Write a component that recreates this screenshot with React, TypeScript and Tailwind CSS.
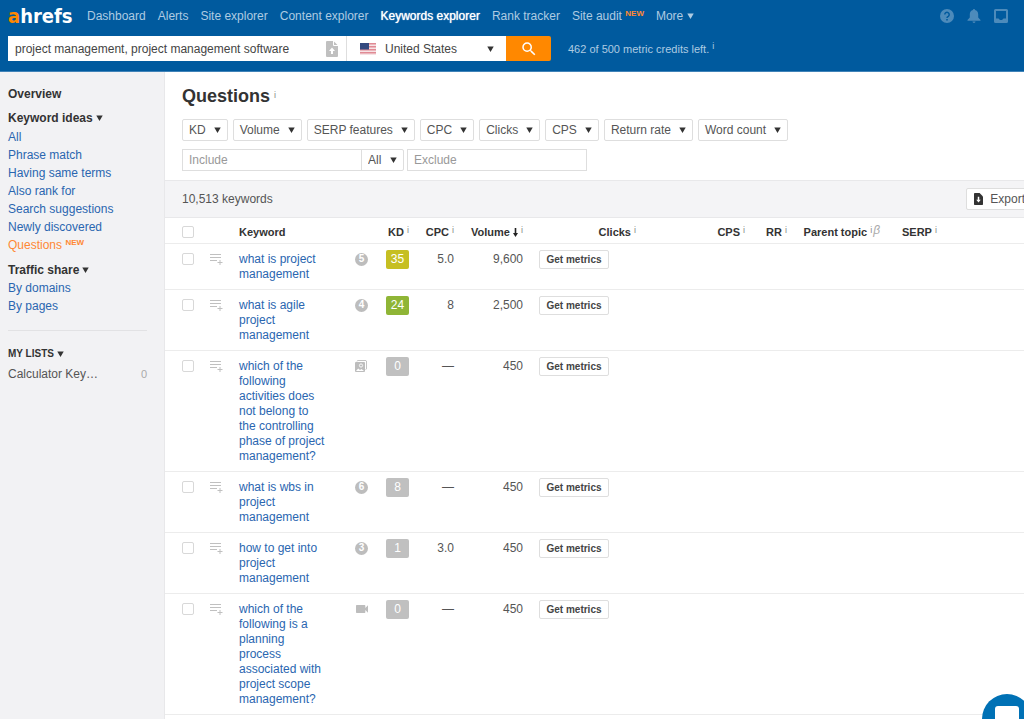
import type { ReactNode } from "react";
import { MdPerson, MdSearch, MdVideocam } from "react-icons/md";

interface Row {
  keyword: string;
  feature: string;
  kd: number;
  kdClass: string;
  cpc: string;
  volume: string;
}

const navBefore = ["Dashboard", "Alerts", "Site explorer", "Content explorer"];

const ideas = [
  "All",
  "Phrase match",
  "Having same terms",
  "Also rank for",
  "Search suggestions",
  "Newly discovered",
];

const filters = [
  "KD",
  "Volume",
  "SERP features",
  "CPC",
  "Clicks",
  "CPS",
  "Return rate",
  "Word count",
];

const rows: Row[] = [
  { keyword: "what is project management", feature: "5", kd: 35, kdClass: "bg-[#c6bf22]", cpc: "5.0", volume: "9,600" },
  { keyword: "what is agile project management", feature: "4", kd: 24, kdClass: "bg-[#8fb536]", cpc: "8", volume: "2,500" },
  {
    keyword: "which of the following activities does not belong to the controlling phase of project management?",
    feature: "images",
    kd: 0,
    kdClass: "bg-[#c0c0c0]",
    cpc: "—",
    volume: "450",
  },
  { keyword: "what is wbs in project management", feature: "6", kd: 8, kdClass: "bg-[#c0c0c0]", cpc: "—", volume: "450" },
  { keyword: "how to get into project management", feature: "3", kd: 1, kdClass: "bg-[#c0c0c0]", cpc: "3.0", volume: "450" },
  {
    keyword: "which of the following is a planning process associated with project scope management?",
    feature: "video",
    kd: 0,
    kdClass: "bg-[#c0c0c0]",
    cpc: "—",
    volume: "450",
  },
];

function Caret({ className = "" }: { className?: string }) {
  return (
    <svg viewBox="0 0 7 6" className={`h-[6px] w-[7px] shrink-0 fill-current ${className}`} aria-hidden="true">
      <path d="M.3 .5h6.400L3.500 6z" />
    </svg>
  );
}

function Info() {
  return <span className="ml-[3px] align-[3px] text-[9px] leading-none font-normal text-[#888]">i</span>;
}

function FileIcon({ className, up = false }: { className: string; up?: boolean }) {
  return (
    <svg viewBox="0 0 12 16" className={className} aria-hidden="true">
      <path d="M1 0h6.5L12 4.5V15a1 1 0 0 1-1 1H1a1 1 0 0 1-1-1V1a1 1 0 0 1 1-1z" fill="currentColor" />
      {up ? (
        <>
          <path d="M7.5 0v4.5H12" fill="none" stroke="#fff" strokeWidth="1" />
          <path d="M6 6.5 9 10H7v3H5v-3H3z" fill="#fff" />
        </>
      ) : (
        <path d="M6 12.500 9 9H7V5H5v4H3z" fill="#fff" />
      )}
    </svg>
  );
}

function Flag() {
  return (
    <svg viewBox="0 0 16 12" className="h-3 w-4 shrink-0" aria-hidden="true">
      <path fill="#f6e3e5" d="M0 0h16v12H0z" />
      <path fill="#e08a94" d="M0 0h16v1.500H0zM0 3h16v1.500H0zM0 6h16v1.500H0zM0 9h16v1.500H0z" />
      <path fill="#33497f" d="M0 0h9v6.500H0z" />
    </svg>
  );
}

function Checkbox({ label }: { label: string }) {
  return (
    <input
      type="checkbox"
      aria-label={label}
      className="block size-3 appearance-none rounded-[2px] border border-[#d8d8d8] bg-white checked:bg-[#2a66b0]"
    />
  );
}

function Feature({ kind }: { kind: string }) {
  if (kind === "video") {
    return <MdVideocam size={16} className="-ml-px text-[#bdbdbd]" aria-label="Video" />;
  }
  if (kind === "images") {
    return (
      <svg viewBox="0 0 12 12" className="size-3" aria-label="Images">
        <path d="M2 1.500 2.500.5h8.500l.5.5v8l-1 .5" fill="none" stroke="#c4c4c4" />
        <rect y="2" width="10" height="10" rx="1" fill="#bdbdbd" />
        <circle cx="6" cy="5.500" r="1.600" fill="none" stroke="#fff" strokeWidth=".9" />
        <path d="M1 11l2.200-2.500L5 10l1.500-1L9 11z" fill="#fff" />
      </svg>
    );
  }
  return (
    <span className="flex size-[13px] items-center justify-center rounded-full bg-[#bdbdbd] text-[10px] leading-none font-bold text-white">
      {kind}
    </span>
  );
}

function SideTitle({ children }: { children: ReactNode }) {
  return (
    <button type="button" className="flex items-center gap-[3px] font-bold text-[#333]">
      {children}
      <Caret />
    </button>
  );
}

function Header() {
  return (
    <header className="overflow-hidden border-b border-[#4083b8] bg-[#005a9e] pb-[10px] whitespace-nowrap">
      <div className="flex h-9 items-center pb-1 pl-2">
        <a
          href="#"
          className="w-[79px] shrink-0 font-['DejaVu_Sans_Condensed','DejaVu_Sans',sans-serif] text-[20px] leading-6 font-bold text-white"
        >
          <span className="text-[#ff8800]">a</span>hrefs
        </a>
        <nav className="flex shrink-0 items-center gap-3 text-[#aecbe2]">
          {navBefore.map((item) => (
            <a key={item} href="#">
              {item}
            </a>
          ))}
          <a href="#" className="text-white [text-shadow:0_0_1px_#fff]">
            Keywords explorer
          </a>
          <a href="#">Rank tracker</a>
          <a href="#">
            Site audit <span className="align-[4px] text-[8px] leading-none font-bold text-[#ff8833]">NEW</span>
          </a>
          <button type="button" className="flex items-center gap-1">
            More <Caret />
          </button>
        </nav>
        <div className="-mr-[17px] ml-auto flex shrink-0 items-center gap-[13px] text-[#4d8bbb]">
          <button type="button" aria-label="Help">
            <svg viewBox="0 0 14 14" className="size-[14px]">
              <circle cx="7" cy="7" r="7" fill="currentColor" />
              <path d="M4.800 5.500a2.200 2.200 0 1 1 3.500 1.800C7.400 7.900 7 8.200 7 9" fill="none" stroke="#005a9e" strokeWidth="1.500" />
              <path d="M6.200 10h1.600v1.500H6.200z" fill="#005a9e" />
            </svg>
          </button>
          <button type="button" aria-label="Notifications">
            <svg viewBox="0 0 14 14" className="size-[14px] fill-current">
              <path d="M7 0c.7 0 1 .5 1 1.100C10 1.600 11.200 3.200 11.200 5.300v3.200L13.500 11v.8H.5V11l2.300-2.500V5.300C2.800 3.200 4 1.600 6 1.100 6 .5 6.300 0 7 0zM5.500 12.600h3C8.500 13.400 7.800 14 7 14s-1.500-.6-1.500-1.400z" />
            </svg>
          </button>
          <button type="button" aria-label="Inbox">
            <svg viewBox="0 0 14 14" className="size-[14px] fill-current">
              <path fillRule="evenodd" d="M1.500 0h11A1.500 1.500 0 0 1 14 1.500v11a1.500 1.500 0 0 1-1.500 1.500h-11A1.500 1.500 0 0 1 0 12.500v-11A1.500 1.500 0 0 1 1.500 0zM2 2v7.500h2.500L6 11h2l1.500-1.500H12V2z" />
            </svg>
          </button>
          <button type="button" aria-label="Account">
            <MdPerson size={20} />
          </button>
        </div>
      </div>
      <form className="flex h-[25px] items-stretch pl-2" onSubmit={(e) => e.preventDefault()}>
        <div className="flex w-[338px] items-center bg-white pr-2 pl-[7px]">
          <input
            type="text"
            aria-label="Keywords"
            defaultValue="project management, project management software"
            className="h-full min-w-0 flex-1 text-[#444] outline-none"
          />
          <FileIcon up className="h-4 w-3 text-[#c0c0c0]" />
        </div>
        <label className="flex w-[160px] items-center border-l border-[#dedede] bg-white pr-3 pl-[13px] text-[#444]">
          <Flag />
          <select aria-label="Country" className="ml-[9px] h-full min-w-0 flex-1 appearance-none outline-none">
            <option>United States</option>
          </select>
          <Caret className="text-[#333]" />
        </label>
        <button
          type="submit"
          aria-label="Search"
          className="flex w-[45px] items-center justify-center rounded-r-[2px] bg-[#ff8800] text-white"
        >
          <MdSearch size={18} />
        </button>
        <p className="ml-[17px] self-center text-[11px] text-[#aecbe2]">
          462 of 500 metric credits left.
          <span className="ml-[3px] align-[4px] text-[9px] leading-none">i</span>
        </p>
      </form>
    </header>
  );
}

function Sidebar() {
  return (
    <aside className="w-[165px] shrink-0 border-r border-[#e8e8ea] bg-[#f2f2f4] pt-[13px] pr-[17px] pl-2 leading-[18px] text-[#2a66b0]">
      <a href="#" className="block font-bold text-[#333]">
        Overview
      </a>
      <div className="mt-[6px]">
        <SideTitle>Keyword ideas</SideTitle>
        <ul className="mt-px">
          {ideas.map((item) => (
            <li key={item}>
              <a href="#">{item}</a>
            </li>
          ))}
          <li>
            <a href="#" className="text-[#ff8833]">
              Questions <span className="align-[4px] text-[8px] leading-none font-bold">NEW</span>
            </a>
          </li>
        </ul>
      </div>
      <div className="mt-[7px] border-b border-[#e2e2e4] pb-[15px]">
        <SideTitle>Traffic share</SideTitle>
        <a href="#" className="block">
          By domains
        </a>
        <a href="#" className="block">
          By pages
        </a>
      </div>
      <div className="mt-[14px] text-[#555]">
        <div className="text-[10px]">
          <SideTitle>MY LISTS</SideTitle>
        </div>
        <a href="#" className="mt-[2px] flex items-center justify-between">
          Calculator Key…
          <span className="text-[11px] text-[#aaa]">0</span>
        </a>
      </div>
    </aside>
  );
}

function Filters() {
  return (
    <div className="px-[17px] pt-3 pb-[9px] text-[#555]">
      <h1 className="text-[18px] leading-6 font-bold text-[#333]">
        Questions
        <span className="ml-1 align-[4px] text-[9px] leading-none font-normal text-[#888]">i</span>
      </h1>
      <div className="mt-[11px] flex gap-[5px]">
        {filters.map((item) => (
          <button
            key={item}
            type="button"
            aria-haspopup="menu"
            className="flex h-[22px] items-center gap-2 rounded-[2px] border border-[#dedede] px-[6px]"
          >
            {item}
            <Caret className="text-[#333]" />
          </button>
        ))}
      </div>
      <div className="mt-2 flex h-[22px]">
        <input
          type="text"
          placeholder="Include"
          aria-label="Include"
          className="w-[180px] border border-[#dedede] px-[6px] outline-none placeholder:text-[#999]"
        />
        <label className="-ml-px flex w-[43px] items-center rounded-r-[2px] border border-[#dedede] px-[6px]">
          <select aria-label="Match" className="min-w-0 flex-1 appearance-none outline-none">
            <option>All</option>
            <option>Any</option>
          </select>
          <Caret className="text-[#333]" />
        </label>
        <input
          type="text"
          placeholder="Exclude"
          aria-label="Exclude"
          className="ml-[3px] w-[180px] border border-[#dedede] px-[6px] outline-none placeholder:text-[#999]"
        />
      </div>
    </div>
  );
}

function KeywordTable() {
  return (
    <table className="w-full table-fixed border-collapse text-[#555]">
      <colgroup>
        <col className="w-[45px]" />
        <col className="w-[29px]" />
        <col className="w-[116px]" />
        <col className="w-[31px]" />
        <col className="w-[23px]" />
        <col className="w-[45px]" />
        <col className="w-[69px]" />
        <col className="w-[113px]" />
        <col className="w-[109px]" />
        <col className="w-[42px]" />
        <col className="w-[93px]" />
        <col />
      </colgroup>
      <thead>
        <tr className="h-[25px] border-b border-[#ececec] text-right text-[11px] whitespace-nowrap text-[#333] *:pt-[3px]">
          <th className="pl-[17px]">
            <Checkbox label="Select all keywords" />
          </th>
          <th />
          <th className="text-left">Keyword</th>
          <th />
          <th>
            KD
            <Info />
          </th>
          <th>
            CPC
            <Info />
          </th>
          <th>
            Volume
            <svg viewBox="0 0 5 9" className="ml-[3px] inline h-[9px] w-[5px] align-[-1px]" aria-hidden="true">
              <path d="M1.700 0h1.600v5H5L2.500 9 0 5h1.700z" fill="#222" />
            </svg>
            <Info />
          </th>
          <th>
            Clicks
            <Info />
          </th>
          <th>
            CPS
            <Info />
          </th>
          <th>
            RR
            <Info />
          </th>
          <th>
            Parent topic
            <Info />
            <span className="ml-px align-[2px] text-[12px] leading-none font-normal text-[#aaa] italic">β</span>
          </th>
          <th className="pl-[22px] text-left">
            SERP
            <Info />
          </th>
        </tr>
      </thead>
      <tbody>
        {rows.map((row) => (
          <tr key={row.keyword} className="border-b border-[#ececec] text-right align-top leading-[15px]">
            <td className="pt-[9px] pl-[17px]">
              <Checkbox label={row.keyword} />
            </td>
            <td className="pt-[9px]">
              <button type="button" aria-label="Add to list" className="block">
                <svg viewBox="0 0 13 12" className="h-3 w-[13px]" fill="none" stroke="#c0c0c0">
                  <path d="M0 1.500h11M0 4.500h11M0 7.500h7M7.500 9.500h5M10 7v5" />
                </svg>
              </button>
            </td>
            <td className="pt-2 pb-[7px] text-left">
              <a href="#" className="block w-[87px] text-[#2a66b0]">
                {row.keyword}
              </a>
            </td>
            <td>
              <div className="flex h-[31px] items-center">
                <Feature kind={row.feature} />
              </div>
            </td>
            <td className="pt-[6px]">
              <span className={`block h-[19px] w-[23px] rounded-[2px] text-center leading-[19px] text-white ${row.kdClass}`}>
                {row.kd}
              </span>
            </td>
            <td className="pt-2">{row.cpc}</td>
            <td className="pt-2">{row.volume}</td>
            <td className="pt-[6px] pl-4">
              <button
                type="button"
                className="block h-[19px] w-[70px] rounded-[2px] border border-[#dedede] text-center text-[10px] leading-[17px] font-bold text-[#444]"
              >
                Get metrics
              </button>
            </td>
            <td />
            <td />
            <td />
            <td />
          </tr>
        ))}
      </tbody>
    </table>
  );
}

export default function App() {
  return (
    <div className="flex min-h-screen flex-col overflow-hidden bg-white font-['Liberation_Sans',Arial,sans-serif] text-[12px] leading-4">
      <Header />
      <div className="flex flex-1">
        <Sidebar />
        <main className="min-w-0 flex-1 overflow-hidden">
          <Filters />
          <div className="flex h-[38px] items-center justify-between border-y border-[#e8e8ea] bg-[#f4f4f6] pl-[17px] text-[#555]">
            <span>10,513 keywords</span>
            <button
              type="button"
              className="-mr-2 flex h-[22px] items-center gap-[6px] rounded-[2px] border border-[#dedede] bg-white px-[6px]"
            >
              <FileIcon className="h-3 w-[11px] text-[#333]" />
              Export
            </button>
          </div>
          <KeywordTable />
        </main>
      </div>
      <button
        type="button"
        aria-label="Open chat"
        className="fixed -right-2 -bottom-[25px] flex size-[50px] justify-center rounded-full bg-[#0071b5] pt-3"
      >
        <span className="h-5 w-[24px] rounded-[3px] bg-white" />
      </button>
    </div>
  );
}
